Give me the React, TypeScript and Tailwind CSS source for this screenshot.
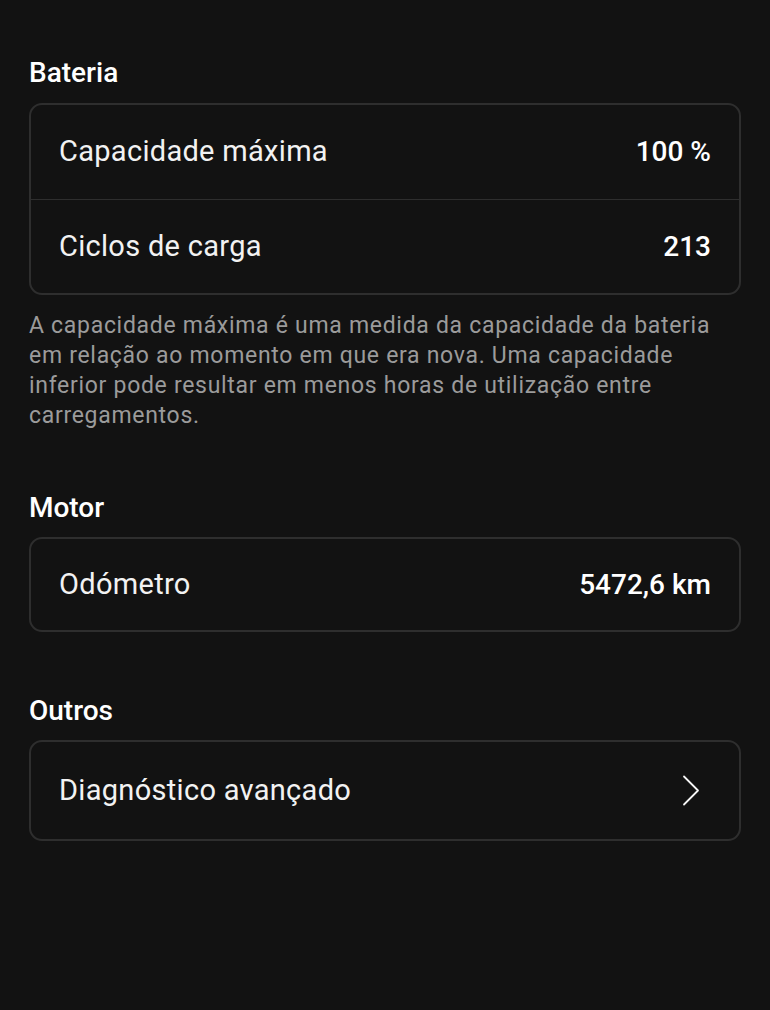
type Row = { label: string; value?: string; chevron?: boolean };

function Chevron() {
  return (
    <svg width="18" height="31" viewBox="0 0 18 31" fill="none" className="mr-[11px]">
      <path d="M2 1.5 L16 15.5 L2 29.5" stroke="#f5f5f5" strokeWidth="1.8" strokeLinecap="round" strokeLinejoin="round" />
    </svg>
  );
}

function Card({ rows, height }: { rows: Row[]; height: string }) {
  return (
    <div className="rounded-[13px] border-2 border-[#2e2e2e] bg-[#121212] overflow-hidden">
      {rows.map((row, i) => (
        <div
          key={row.label}
          className={`flex items-center justify-between pl-[28px] pr-[28px] ${height} ${
            i > 0 ? 'border-t border-[#2e2e2e]' : ''
          }`}
        >
          <span className="text-[29px] text-[#f2f2f2] tracking-[0.3px]">{row.label}</span>
          {row.value && <span className="text-[28px] font-medium text-white">{row.value}</span>}
          {row.chevron && <Chevron />}
        </div>
      ))}
    </div>
  );
}

export default function App() {
  return (
    <div
      className="min-h-screen bg-[#121212] px-[29px] pt-[54px]"
      style={{ fontFamily: 'Roboto, "Noto Sans", sans-serif' }}
    >
      {/* Bateria */}
      <h2 className="text-[28px] font-medium text-white leading-[38px] mb-[11px]">Bateria</h2>
      <Card
        height="h-[94px]"
        rows={[
          { label: 'Capacidade máxima', value: '100 %' },
          { label: 'Ciclos de carga', value: '213' },
        ]}
      />
      <p className="mt-[16px] text-[23px] leading-[30px] text-[#9b9b9b] tracking-[0.7px]">
        A capacidade máxima é uma medida da capacidade da bateria em relação ao momento em que era nova. Uma capacidade
        inferior pode resultar em menos horas de utilização entre carregamentos.
      </p>

      {/* Motor */}
      <h2 className="mt-[58px] text-[28px] font-medium text-white leading-[38px] mb-[10px]">Motor</h2>
      <Card height="h-[91px]" rows={[{ label: 'Odómetro', value: '5472,6 km' }]} />

      {/* Outros */}
      <h2 className="mt-[60px] text-[28px] font-medium text-white leading-[38px] mb-[10px]">Outros</h2>
      <Card height="h-[97px]" rows={[{ label: 'Diagnóstico avançado', chevron: true }]} />
    </div>
  );
}
